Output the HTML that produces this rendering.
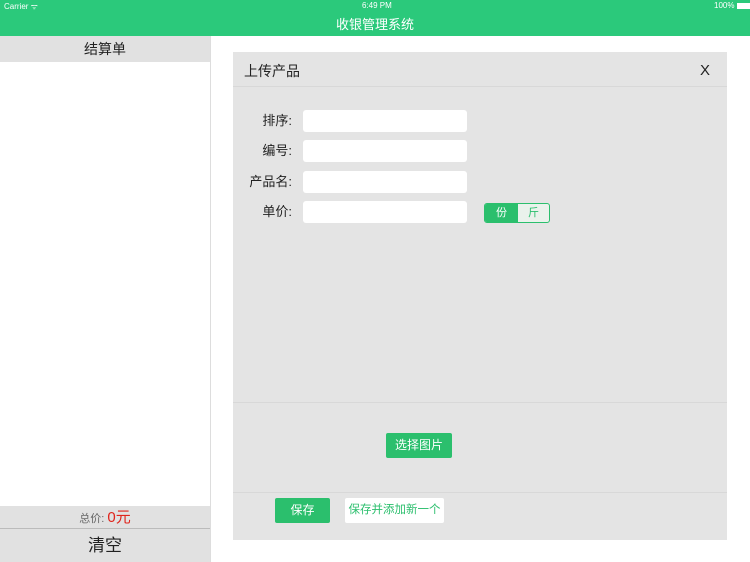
<!DOCTYPE html>
<html><head><meta charset="utf-8"><style>
body{margin:0;width:750px;height:562px;position:relative;overflow:hidden;background:#fff;font-family:"Liberation Sans","Noto Sans CJK SC",sans-serif;}
.a{position:absolute;}
.in{position:absolute;left:303px;width:164px;height:22px;background:#fff;border-radius:3px;}
.lb{position:absolute;right:458px;font-size:13px;color:#222;line-height:22px;}
</style></head><body>
<div class="a" style="left:0;top:0;width:750px;height:36px;background:#2bc97b;"></div>
<div class="a" style="left:4px;top:1px;font-size:8px;color:#fff;">Carrier ᯤ</div>
<div class="a" style="left:362px;top:1px;font-size:8px;color:#fff;">6:49 PM</div>
<div class="a" style="left:714px;top:1px;font-size:8px;color:#fff;white-space:nowrap;">100% <span style="display:inline-block;width:14px;height:6px;background:#fff;vertical-align:middle"></span></div>
<div class="a" style="left:0;top:14px;width:750px;text-align:center;font-size:13px;color:#fff;">收银管理系统</div>
<div class="a" style="left:0;top:36px;width:210px;height:26px;background:#e1e1e1;text-align:center;font-size:14px;line-height:26px;color:#222;">结算单</div>
<div class="a" style="left:210px;top:36px;width:1px;height:526px;background:#ddd;"></div>
<div class="a" style="left:0;top:506px;width:210px;height:22px;background:#e1e1e1;text-align:center;font-size:11px;line-height:24px;color:#666;">总价: <span style="color:#e0241c;font-size:15px;">0元</span></div>
<div class="a" style="left:0;top:528px;width:210px;height:1px;background:#bbb;"></div>
<div class="a" style="left:0;top:529px;width:210px;height:33px;background:#e1e1e1;text-align:center;font-size:17px;line-height:33px;color:#222;">清空</div>
<div class="a" style="left:233px;top:52px;width:494px;height:488px;background:#e4e4e4;"></div>
<div class="a" style="left:244px;top:61px;font-size:14px;color:#222;">上传产品</div>
<div class="a" style="left:700px;top:62px;font-size:15px;color:#222;">X</div>
<div class="a" style="left:233px;top:86px;width:494px;height:1px;background:#d8d8d8;"></div>
<div class="lb" style="top:110px;">排序:</div><div class="in" style="top:110px;"></div>
<div class="lb" style="top:140px;">编号:</div><div class="in" style="top:140px;"></div>
<div class="lb" style="top:171px;">产品名:</div><div class="in" style="top:171px;"></div>
<div class="lb" style="top:201px;">单价:</div><div class="in" style="top:201px;"></div>
<div class="a" style="left:484px;top:203px;width:64px;height:18px;border:1px solid #2bbf6d;border-radius:3px;background:#eaf2ec;overflow:hidden;font-size:11px;line-height:18px;">
<div class="a" style="left:0;top:0;width:33px;height:18px;background:#2bbf6d;color:#fff;text-align:center;">份</div>
<div class="a" style="left:33px;top:0;width:31px;height:18px;color:#2bbf6d;text-align:center;">斤</div></div>
<div class="a" style="left:233px;top:402px;width:494px;height:1px;background:#d8d8d8;"></div>
<div class="a" style="left:386px;top:433px;width:66px;height:25px;background:#2bbf6d;border-radius:2px;color:#fff;font-size:12px;line-height:25px;text-align:center;">选择图片</div>
<div class="a" style="left:233px;top:492px;width:494px;height:1px;background:#d8d8d8;"></div>
<div class="a" style="left:275px;top:498px;width:55px;height:25px;background:#2bbf6d;border-radius:2px;color:#fff;font-size:12px;line-height:25px;text-align:center;">保存</div>
<div class="a" style="left:345px;top:498px;width:99px;height:25px;background:#fff;border-radius:2px;color:#2bbf6d;font-size:11.5px;line-height:25px;text-align:center;">保存并添加新一个</div>
</body></html>
